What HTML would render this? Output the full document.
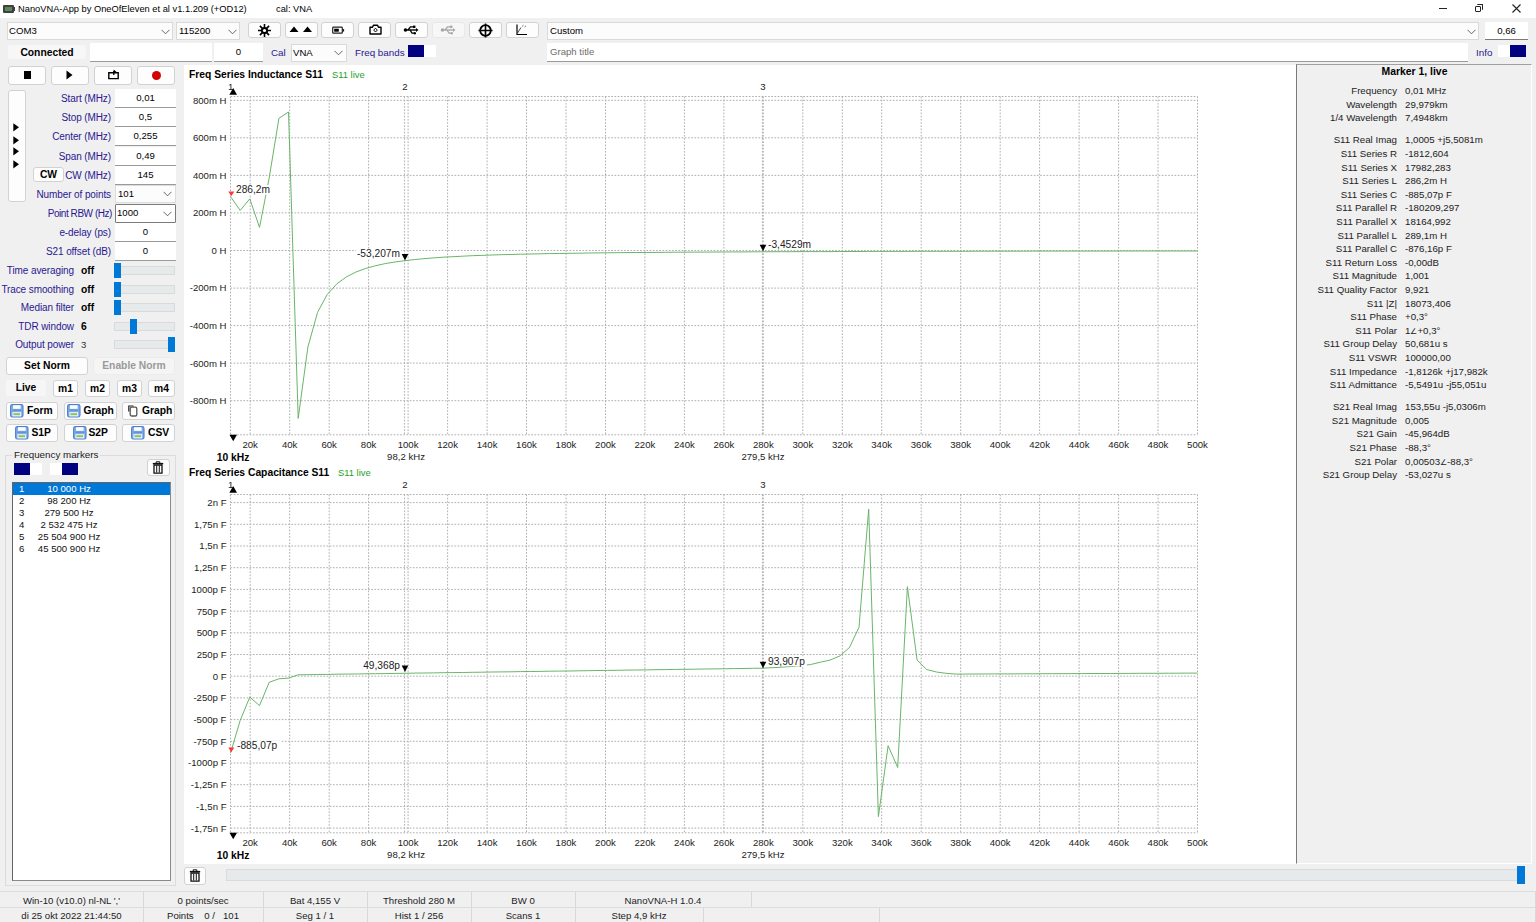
<!DOCTYPE html><html><head><meta charset="utf-8"><style>
*{margin:0;padding:0;box-sizing:border-box}
html,body{width:1536px;height:922px;overflow:hidden;background:#f0f0f0;font-family:"Liberation Sans", sans-serif;font-size:9.6px;color:#000}
.a{position:absolute;white-space:pre}
.btn{position:absolute;background:#fdfdfd;border:1px solid #d2d2d2;border-radius:3px}
.edit{position:absolute;background:#fff;border-bottom:1px solid #9a9a9a}
.combo{position:absolute;background:#fcfcfc;border:1px solid #d9d9d9}
.lbl{position:absolute;color:#2a1890;font-size:10px;letter-spacing:-0.1px;white-space:pre;text-align:right}
.c{text-align:center}
.b{font-weight:bold}
</style></head><body>
<div class="a" style="left:0;top:0;width:1536px;height:18px;background:#fff"></div>
<div class="a" style="left:3px;top:5px;width:11px;height:8px;background:#404040;border-radius:1px"></div>
<div class="a" style="left:5px;top:7px;width:7px;height:4px;background:#5a8a5a"></div>
<div class="a" style="left:14px;top:7px;width:1px;height:4px;background:#3c3c3c"></div>
<div class="a" style="left:18px;top:4px;font-size:9.3px;color:#000">NanoVNA-App by OneOfEleven et al v1.1.209 (+OD12)</div>
<div class="a" style="left:276px;top:4px;font-size:9.3px;color:#000">cal: VNA</div>
<div class="a" style="left:1439px;top:8px;width:8px;height:1px;background:#222"></div>
<div class="a" style="left:1475px;top:6px;width:6px;height:6px;border:1px solid #222;border-radius:1px"></div>
<div class="a" style="left:1477px;top:4px;width:6px;height:6px;border-top:1px solid #222;border-right:1px solid #222;border-radius:1px"></div>
<svg class="a" style="left:1511px;top:3px" width="11" height="11"><path d="M1.5 1.5L9.5 9.5M9.5 1.5L1.5 9.5" stroke="#222" stroke-width="1.1"/></svg>
<div class="combo" style="left:7px;top:22px;width:166px;height:18px"></div>
<div class="a" style="left:9px;top:25px">COM3</div>
<svg class="a" style="left:161px;top:29px" width="9" height="6"><path d="M0.5 0.8L4.5 4.8L8.5 0.8" fill="none" stroke="#555" stroke-width="0.9"/></svg>
<div class="combo" style="left:176px;top:22px;width:64px;height:18px"></div>
<div class="a" style="left:179px;top:25px">115200</div>
<svg class="a" style="left:228px;top:29px" width="9" height="6"><path d="M0.5 0.8L4.5 4.8L8.5 0.8" fill="none" stroke="#555" stroke-width="0.9"/></svg>
<div class="btn" style="left:248px;top:22px;width:33px;height:16px"></div>
<div class="btn" style="left:285px;top:22px;width:33px;height:16px"></div>
<div class="btn" style="left:321px;top:22px;width:33px;height:16px"></div>
<div class="btn" style="left:358px;top:22px;width:33px;height:16px"></div>
<div class="btn" style="left:395px;top:22px;width:33px;height:16px"></div>
<div class="btn" style="left:432px;top:22px;width:33px;height:16px;border-color:#e8e8e8;background:#f7f7f7"></div>
<div class="btn" style="left:469px;top:22px;width:33px;height:16px"></div>
<div class="btn" style="left:506px;top:22px;width:33px;height:16px"></div>
<svg class="a" style="left:257px;top:23px" width="15" height="15"><g stroke="#000" stroke-width="1.6"><path d="M7.5 1V14M1 7.5H14M2.9 2.9L12.1 12.1M12.1 2.9L2.9 12.1"/></g><circle cx="7.5" cy="7.5" r="3.6" fill="#000"/><circle cx="7.5" cy="7.5" r="1.6" fill="#fff"/></svg>
<svg class="a" style="left:289px;top:25px" width="26" height="8"><path d="M0.5 7L5 1.5L9.5 7Z M14 7L18.5 1.5L23 7Z" fill="#000"/></svg>
<svg class="a" style="left:332px;top:26px" width="13" height="9"><rect x="0.7" y="1.2" width="9.6" height="6" rx="0.8" fill="none" stroke="#222" stroke-width="1.2"/><rect x="2.2" y="2.7" width="4.6" height="3" fill="#000"/><rect x="10.6" y="3" width="1.5" height="2.6" fill="#222"/></svg>
<svg class="a" style="left:369px;top:24px" width="13" height="11"><path d="M1 3.2H3.5L4.6 1.2H8.4L9.5 3.2H12V10H1Z" fill="none" stroke="#000" stroke-width="1.4" stroke-linejoin="round"/><path d="M6.5 4.2L8.3 6.1L6.5 8L4.7 6.1Z" fill="none" stroke="#000" stroke-width="1"/></svg>
<svg class="a" style="left:403px;top:25px" width="16" height="10"><path d="M1.5 5H14" stroke="#000" stroke-width="1.4"/><circle cx="2.5" cy="5" r="1.8" fill="#000"/><path d="M5 5L7.5 1.8H10M7 5L9 8.2H11" fill="none" stroke="#000" stroke-width="1.3"/><rect x="10" y="0.6" width="2.4" height="2.4" fill="#000"/><circle cx="11.8" cy="8.2" r="1.2" fill="#000"/><path d="M13 3L15.5 5L13 7Z" fill="#000"/></svg>
<svg class="a" style="left:440px;top:25px" width="16" height="10"><path d="M1.5 5H14" stroke="#a8a8a8" stroke-width="1.4"/><circle cx="2.5" cy="5" r="1.8" fill="#a8a8a8"/><path d="M5 5L7.5 1.8H10M7 5L9 8.2H11" fill="none" stroke="#a8a8a8" stroke-width="1.3"/><rect x="10" y="0.6" width="2.4" height="2.4" fill="#a8a8a8"/><circle cx="11.8" cy="8.2" r="1.2" fill="#a8a8a8"/><path d="M13 3L15.5 5L13 7Z" fill="#a8a8a8"/></svg>
<svg class="a" style="left:478px;top:23px" width="15" height="15"><circle cx="7.5" cy="7.5" r="5.3" fill="none" stroke="#000" stroke-width="1.8"/><path d="M7.5 0.5V14.5M0.5 7.5H14.5" stroke="#000" stroke-width="1.6"/></svg>
<svg class="a" style="left:515px;top:23px" width="14" height="13"><path d="M2 1.5V11.5H12" fill="none" stroke="#000" stroke-width="1.2"/><path d="M2.5 10L6 4.5" stroke="#333" stroke-width="0.9"/><path d="M7 3.5L8.5 2.2M9.5 4L11 2.8" stroke="#555" stroke-width="0.8"/></svg>
<div class="combo" style="left:547px;top:22px;width:932px;height:18px"></div>
<div class="a" style="left:550px;top:25px">Custom</div>
<svg class="a" style="left:1467px;top:29px" width="9" height="6"><path d="M0.5 0.8L4.5 4.8L8.5 0.8" fill="none" stroke="#555" stroke-width="0.9"/></svg>
<div class="edit" style="left:1485px;top:22px;width:43px;height:18px;border-bottom-color:#7a7a7a"></div>
<div class="a c" style="left:1485px;top:25px;width:43px">0,66</div>
<div class="a b c" style="left:8px;top:45px;width:78px;height:14px;background:#f7f7f7;font-size:10.3px;padding-top:2px;border-radius:2px">Connected</div>
<div class="edit" style="left:90px;top:43px;width:122px;height:19px;border-top:1px solid #fff"></div>
<div class="edit" style="left:214px;top:43px;width:49px;height:19px"></div>
<div class="a c" style="left:214px;top:46px;width:49px">0</div>
<div class="a" style="left:271px;top:47px;color:#2a1890;font-size:9.8px">Cal</div>
<div class="combo" style="left:291px;top:44px;width:56px;height:18px"></div>
<div class="a" style="left:293px;top:47px">VNA</div>
<svg class="a" style="left:334px;top:50px" width="9" height="6"><path d="M0.5 0.8L4.5 4.8L8.5 0.8" fill="none" stroke="#555" stroke-width="0.9"/></svg>
<div class="a" style="left:355px;top:47px;color:#2a1890;font-size:9.8px">Freq bands</div>
<div class="a" style="left:408px;top:45px;width:16px;height:12px;background:#000080"></div>
<div class="a" style="left:424px;top:45px;width:12px;height:12px;background:#fff"></div>
<div class="edit" style="left:547px;top:43px;width:921px;height:19px"></div>
<div class="a" style="left:550px;top:46px;color:#6d6d6d">Graph title</div>
<div class="a" style="left:1476px;top:47px;color:#2a1890;font-size:9.8px">Info</div>
<div class="a" style="left:1498px;top:45px;width:12px;height:12px;background:#fff"></div>
<div class="a" style="left:1510px;top:45px;width:16px;height:12px;background:#000080"></div>
<div class="btn" style="left:8px;top:66px;width:38px;height:19px"></div>
<div class="btn" style="left:51px;top:66px;width:38px;height:19px"></div>
<div class="btn" style="left:94px;top:66px;width:38px;height:19px"></div>
<div class="btn" style="left:137px;top:66px;width:38px;height:19px"></div>
<div class="a" style="left:24px;top:71px;width:7px;height:8px;background:#000"></div>
<svg class="a" style="left:66px;top:70px" width="7" height="10"><path d="M0.5 0.5L6.5 5L0.5 9.5Z" fill="#000"/></svg>
<svg class="a" style="left:107px;top:69px" width="13" height="11"><path d="M1.8 3.8H11.2V9.6H1.8Z" fill="none" stroke="#000" stroke-width="1.4"/><path d="M6.8 2V6" stroke="#000" stroke-width="1.3"/><path d="M6.6 0.6L9.4 2.7L6.6 4.8Z" fill="#000"/></svg>
<div class="a" style="left:152px;top:71px;width:9px;height:9px;border-radius:50%;background:#d20000"></div>
<div class="btn" style="left:8px;top:90px;width:18px;height:112px;border-radius:3px"></div>
<svg class="a" style="left:13px;top:122.5px" width="7" height="9"><path d="M0.3 0.2L6 4.3L0.3 8.4Z" fill="#000"/></svg>
<svg class="a" style="left:13px;top:135.5px" width="7" height="9"><path d="M0.3 0.2L6 4.3L0.3 8.4Z" fill="#000"/></svg>
<svg class="a" style="left:13px;top:147px" width="7" height="9"><path d="M0.3 0.2L6 4.3L0.3 8.4Z" fill="#000"/></svg>
<svg class="a" style="left:13px;top:160px" width="7" height="9"><path d="M0.3 0.2L6 4.3L0.3 8.4Z" fill="#000"/></svg>
<div class="edit" style="left:115px;top:89.0px;width:61px;height:19px;border-top:1px solid #fff"></div>
<div class="a c" style="left:115px;top:92.0px;width:61px">0,01</div>
<div class="lbl" style="left:20px;top:93.0px;width:91px">Start (MHz)</div>
<div class="edit" style="left:115px;top:108.2px;width:61px;height:19px;border-top:1px solid #fff"></div>
<div class="a c" style="left:115px;top:111.2px;width:61px">0,5</div>
<div class="lbl" style="left:20px;top:112.2px;width:91px">Stop (MHz)</div>
<div class="edit" style="left:115px;top:127.4px;width:61px;height:19px;border-top:1px solid #fff"></div>
<div class="a c" style="left:115px;top:130.4px;width:61px">0,255</div>
<div class="lbl" style="left:20px;top:131.4px;width:91px">Center (MHz)</div>
<div class="edit" style="left:115px;top:146.6px;width:61px;height:19px;border-top:1px solid #fff"></div>
<div class="a c" style="left:115px;top:149.6px;width:61px">0,49</div>
<div class="lbl" style="left:20px;top:150.6px;width:91px">Span (MHz)</div>
<div class="edit" style="left:115px;top:165.8px;width:61px;height:19px;border-top:1px solid #fff"></div>
<div class="a c" style="left:115px;top:168.8px;width:61px">145</div>
<div class="lbl" style="left:20px;top:169.8px;width:91px">CW (MHz)</div>
<div class="btn b c" style="left:33px;top:167px;width:31px;height:15px;font-size:10.3px;padding-top:1px">CW</div>
<div class="combo" style="left:115px;top:185px;width:61px;height:18px;border-color:#dcdcdc"></div>
<div class="a" style="left:118px;top:188px">101</div>
<svg class="a" style="left:163px;top:191px" width="9" height="6"><path d="M0.5 0.8L4.5 4.8L8.5 0.8" fill="none" stroke="#555" stroke-width="0.9"/></svg>
<div class="lbl" style="left:0px;top:189px;width:111px">Number of points</div>
<div class="a" style="left:115px;top:204px;width:61px;height:19px;background:#fff;border:1px solid #7a7a7a;border-radius:1px"></div>
<div class="a" style="left:117px;top:207px">1000</div>
<svg class="a" style="left:163px;top:211px" width="9" height="6"><path d="M0.5 0.8L4.5 4.8L8.5 0.8" fill="none" stroke="#555" stroke-width="0.9"/></svg>
<div class="lbl" style="left:0px;top:208px;width:112px;letter-spacing:-0.45px">Point RBW (Hz)</div>
<div class="edit" style="left:115px;top:223px;width:61px;height:19px"></div>
<div class="a c" style="left:115px;top:226px;width:61px">0</div>
<div class="lbl" style="left:0px;top:227px;width:111px">e-delay (ps)</div>
<div class="edit" style="left:115px;top:242px;width:61px;height:19px"></div>
<div class="a c" style="left:115px;top:245px;width:61px">0</div>
<div class="lbl" style="left:0px;top:246px;width:111px">S21 offset (dB)</div>
<div class="lbl" style="left:0px;top:265px;width:74px">Time averaging</div>
<div class="a" style="left:81px;top:265px;font-weight:bold;font-size:10.3px;">off</div>
<div class="a" style="left:114px;top:266px;width:61px;height:9px;background:#e7eaea;border:1px solid #dadada"></div>
<div class="a" style="left:114px;top:263px;width:7px;height:15px;background:#0078d7"></div>
<div class="lbl" style="left:0px;top:284px;width:74px">Trace smoothing</div>
<div class="a" style="left:81px;top:284px;font-weight:bold;font-size:10.3px;">off</div>
<div class="a" style="left:114px;top:285px;width:61px;height:9px;background:#e7eaea;border:1px solid #dadada"></div>
<div class="a" style="left:114px;top:282px;width:7px;height:15px;background:#0078d7"></div>
<div class="lbl" style="left:0px;top:302px;width:74px">Median filter</div>
<div class="a" style="left:81px;top:302px;font-weight:bold;font-size:10.3px;">off</div>
<div class="a" style="left:114px;top:303px;width:61px;height:9px;background:#e7eaea;border:1px solid #dadada"></div>
<div class="a" style="left:114px;top:300px;width:7px;height:15px;background:#0078d7"></div>
<div class="lbl" style="left:0px;top:321px;width:74px">TDR window</div>
<div class="a" style="left:81px;top:321px;font-weight:bold;font-size:10.3px;">6</div>
<div class="a" style="left:114px;top:322px;width:61px;height:9px;background:#e7eaea;border:1px solid #dadada"></div>
<div class="a" style="left:130px;top:319px;width:7px;height:15px;background:#0078d7"></div>
<div class="lbl" style="left:0px;top:339px;width:74px">Output power</div>
<div class="a" style="left:81px;top:339px;font-size:9.6px;color:#333;">3</div>
<div class="a" style="left:114px;top:340px;width:61px;height:9px;background:#e7eaea;border:1px solid #dadada"></div>
<div class="a" style="left:168px;top:337px;width:7px;height:15px;background:#0078d7"></div>
<div class="btn b c" style="left:6px;top:357px;width:82px;height:18px;font-size:10.3px;padding-top:2px">Set Norm</div>
<div class="btn b c" style="left:93px;top:357px;width:82px;height:18px;font-size:10.3px;padding-top:2px;color:#9a9a9a;border-color:#ececec;background:#f5f5f5">Enable Norm</div>
<div class="a b c" style="left:6px;top:380px;width:40px;height:16px;font-size:10.3px;padding-top:2px;background:#f6f6f6;border-radius:3px">Live</div>
<div class="btn b c" style="left:53px;top:380px;width:25px;height:17px;font-size:10.3px;padding-top:2px">m1</div>
<div class="btn b c" style="left:85px;top:380px;width:25px;height:17px;font-size:10.3px;padding-top:2px">m2</div>
<div class="btn b c" style="left:117px;top:380px;width:25px;height:17px;font-size:10.3px;padding-top:2px">m3</div>
<div class="btn b c" style="left:148px;top:380px;width:27px;height:17px;font-size:10.3px;padding-top:2px">m4</div>
<div class="btn" style="left:6px;top:402px;width:52px;height:18px"></div>
<svg class="a" style="left:10px;top:404px" width="14" height="14"><rect x="0.6" y="0.6" width="12.4" height="12.4" rx="1.8" fill="#84ace6" stroke="#4a7fd2" stroke-width="1.1"/><rect x="3" y="1.2" width="7.6" height="3.6" fill="#fff"/><rect x="2.4" y="5.6" width="8.8" height="1.2" fill="#5b8ad8"/><rect x="2.4" y="8.2" width="8.8" height="4.2" fill="#f2f6fc"/><rect x="3.4" y="9.2" width="6.8" height="2" fill="#86c466"/></svg>
<div class="a b" style="left:27px;top:405px;font-size:10.3px">Form</div>
<div class="btn" style="left:64px;top:402px;width:53px;height:18px"></div>
<svg class="a" style="left:67px;top:404px" width="14" height="14"><rect x="0.6" y="0.6" width="12.4" height="12.4" rx="1.8" fill="#84ace6" stroke="#4a7fd2" stroke-width="1.1"/><rect x="3" y="1.2" width="7.6" height="3.6" fill="#fff"/><rect x="2.4" y="5.6" width="8.8" height="1.2" fill="#5b8ad8"/><rect x="2.4" y="8.2" width="8.8" height="4.2" fill="#f2f6fc"/><rect x="3.4" y="9.2" width="6.8" height="2" fill="#86c466"/></svg>
<div class="a b" style="left:83.5px;top:405px;font-size:10.3px">Graph</div>
<div class="btn" style="left:122px;top:402px;width:53px;height:18px"></div>
<svg class="a" style="left:128px;top:405px" width="10" height="12"><path d="M0.8 6.5V1H5.5" fill="none" stroke="#222" stroke-width="1.2"/><rect x="2.2" y="2.2" width="6.6" height="8.8" rx="1.6" fill="#fff" stroke="#555" stroke-width="1.3"/></svg>
<div class="a b" style="left:142px;top:405px;font-size:10.3px">Graph</div>
<div class="btn" style="left:6px;top:424px;width:52px;height:18px"></div>
<svg class="a" style="left:15px;top:426px" width="14" height="14"><rect x="0.6" y="0.6" width="12.4" height="12.4" rx="1.8" fill="#84ace6" stroke="#4a7fd2" stroke-width="1.1"/><rect x="3" y="1.2" width="7.6" height="3.6" fill="#fff"/><rect x="2.4" y="5.6" width="8.8" height="1.2" fill="#5b8ad8"/><rect x="2.4" y="8.2" width="8.8" height="4.2" fill="#f2f6fc"/><rect x="3.4" y="9.2" width="6.8" height="2" fill="#86c466"/></svg>
<div class="a b" style="left:31.5px;top:427px;font-size:10.3px">S1P</div>
<div class="btn" style="left:64px;top:424px;width:53px;height:18px"></div>
<svg class="a" style="left:73px;top:426px" width="14" height="14"><rect x="0.6" y="0.6" width="12.4" height="12.4" rx="1.8" fill="#84ace6" stroke="#4a7fd2" stroke-width="1.1"/><rect x="3" y="1.2" width="7.6" height="3.6" fill="#fff"/><rect x="2.4" y="5.6" width="8.8" height="1.2" fill="#5b8ad8"/><rect x="2.4" y="8.2" width="8.8" height="4.2" fill="#f2f6fc"/><rect x="3.4" y="9.2" width="6.8" height="2" fill="#86c466"/></svg>
<div class="a b" style="left:88.5px;top:427px;font-size:10.3px">S2P</div>
<div class="btn" style="left:122px;top:424px;width:53px;height:18px"></div>
<svg class="a" style="left:131px;top:426px" width="14" height="14"><rect x="0.6" y="0.6" width="12.4" height="12.4" rx="1.8" fill="#84ace6" stroke="#4a7fd2" stroke-width="1.1"/><rect x="3" y="1.2" width="7.6" height="3.6" fill="#fff"/><rect x="2.4" y="5.6" width="8.8" height="1.2" fill="#5b8ad8"/><rect x="2.4" y="8.2" width="8.8" height="4.2" fill="#f2f6fc"/><rect x="3.4" y="9.2" width="6.8" height="2" fill="#86c466"/></svg>
<div class="a b" style="left:148px;top:427px;font-size:10.3px">CSV</div>
<div class="a" style="left:5px;top:455px;width:171px;height:431px;border:1px solid #dcdcdc"></div>
<div class="a" style="left:12px;top:449px;padding:0 2px;background:#f0f0f0;color:#222;font-size:9.8px">Frequency markers</div>
<div class="a" style="left:14px;top:463px;width:16px;height:12px;background:#000080"></div>
<div class="a" style="left:30px;top:463px;width:12px;height:12px;background:#fff"></div>
<div class="a" style="left:50px;top:463px;width:12px;height:12px;background:#fff"></div>
<div class="a" style="left:62px;top:463px;width:16px;height:12px;background:#000080"></div>
<div class="btn" style="left:147px;top:459px;width:23px;height:17px"></div>
<svg class="a" style="left:152px;top:461px" width="12" height="13"><path d="M0.8 2.6H11.2" stroke="#111" stroke-width="1.4"/><path d="M4.2 2V0.8H7.8V2" fill="none" stroke="#111" stroke-width="1"/><path d="M2 4H10V12.2H2Z" fill="none" stroke="#111" stroke-width="1.3"/><path d="M4.7 4.5V11.5M7.3 4.5V11.5" stroke="#111" stroke-width="1"/></svg>
<div class="a" style="left:12px;top:482px;width:159px;height:399px;background:#fff;border:1px solid #646464;border-right-color:#8a8a8a;border-bottom-color:#8a8a8a"></div>
<div class="a" style="left:13px;top:483px;width:157px;height:12px;background:#0078d7"></div>
<div class="a" style="left:19px;top:483px;color:#fff">1</div>
<div class="a c" style="left:29px;top:483px;width:80px;color:#fff">10 000 Hz</div>
<div class="a" style="left:19px;top:495px;color:#111">2</div>
<div class="a c" style="left:29px;top:495px;width:80px;color:#111">98 200 Hz</div>
<div class="a" style="left:19px;top:507px;color:#111">3</div>
<div class="a c" style="left:29px;top:507px;width:80px;color:#111">279 500 Hz</div>
<div class="a" style="left:19px;top:519px;color:#111">4</div>
<div class="a c" style="left:29px;top:519px;width:80px;color:#111">2 532 475 Hz</div>
<div class="a" style="left:19px;top:531px;color:#111">5</div>
<div class="a c" style="left:29px;top:531px;width:80px;color:#111">25 504 900 Hz</div>
<div class="a" style="left:19px;top:543px;color:#111">6</div>
<div class="a c" style="left:29px;top:543px;width:80px;color:#111">45 500 900 Hz</div>
<div class="a" style="left:184px;top:65px;width:1112px;height:799px;background:#fff"></div>
<div class="a" style="left:1296px;top:64px;width:236px;height:800px;border-top:1px solid #a0a0a0;border-left:1px solid #7a7a7a;border-right:1px solid #fff;border-bottom:1px solid #fff;background:#f0f0f0"></div>
<div class="btn" style="left:184px;top:867px;width:22px;height:18px"></div>
<svg class="a" style="left:189px;top:869px" width="12" height="13"><path d="M0.8 2.6H11.2" stroke="#111" stroke-width="1.4"/><path d="M4.2 2V0.8H7.8V2" fill="none" stroke="#111" stroke-width="1"/><path d="M2 4H10V12.2H2Z" fill="none" stroke="#111" stroke-width="1.3"/><path d="M4.7 4.5V11.5M7.3 4.5V11.5" stroke="#111" stroke-width="1"/></svg>
<div class="a" style="left:226px;top:869px;width:1299px;height:12px;background:#e7eaea;border:1px solid #dadada"></div>
<div class="a" style="left:1517px;top:866px;width:8px;height:18px;background:#0078d7"></div>
<div class="a" style="left:0;top:891px;width:1536px;height:1px;background:#dcdcdc"></div>
<div class="a" style="left:0;top:907px;width:1536px;height:1px;background:#dcdcdc"></div>
<div class="a" style="left:143px;top:892px;width:1px;height:15px;background:#d8d8d8"></div>
<div class="a" style="left:263px;top:892px;width:1px;height:15px;background:#d8d8d8"></div>
<div class="a" style="left:367px;top:892px;width:1px;height:15px;background:#d8d8d8"></div>
<div class="a" style="left:471px;top:892px;width:1px;height:15px;background:#d8d8d8"></div>
<div class="a" style="left:575px;top:892px;width:1px;height:15px;background:#d8d8d8"></div>
<div class="a" style="left:751px;top:892px;width:1px;height:15px;background:#d8d8d8"></div>
<div class="a" style="left:143px;top:908px;width:1px;height:14px;background:#d8d8d8"></div>
<div class="a" style="left:263px;top:908px;width:1px;height:14px;background:#d8d8d8"></div>
<div class="a" style="left:367px;top:908px;width:1px;height:14px;background:#d8d8d8"></div>
<div class="a" style="left:471px;top:908px;width:1px;height:14px;background:#d8d8d8"></div>
<div class="a" style="left:575px;top:908px;width:1px;height:14px;background:#d8d8d8"></div>
<div class="a" style="left:703px;top:908px;width:1px;height:14px;background:#d8d8d8"></div>
<div class="a" style="left:879px;top:908px;width:1px;height:14px;background:#d8d8d8"></div>
<div class="a c" style="left:0px;top:895px;width:143px;color:#222">Win-10 (v10.0) nl-NL ','</div>
<div class="a c" style="left:143px;top:895px;width:120px;color:#222">0 points/sec</div>
<div class="a c" style="left:263px;top:895px;width:104px;color:#222">Bat 4,155 V</div>
<div class="a c" style="left:367px;top:895px;width:104px;color:#222">Threshold 280 M</div>
<div class="a c" style="left:471px;top:895px;width:104px;color:#222">BW 0</div>
<div class="a c" style="left:575px;top:895px;width:176px;color:#222">NanoVNA-H 1.0.4</div>
<div class="a c" style="left:0px;top:910px;width:143px;color:#222">di 25 okt 2022 21:44:50</div>
<div class="a c" style="left:143px;top:910px;width:120px;color:#222">Points    0 /   101</div>
<div class="a c" style="left:263px;top:910px;width:104px;color:#222">Seg 1 / 1</div>
<div class="a c" style="left:367px;top:910px;width:104px;color:#222">Hist 1 / 256</div>
<div class="a c" style="left:471px;top:910px;width:104px;color:#222">Scans 1</div>
<div class="a c" style="left:575px;top:910px;width:128px;color:#222">Step 4,9 kHz</div>
<div class="a" style="left:1535px;top:892px;width:1px;height:30px;background:#d8d8d8"></div>
<div class="a b c" style="left:1298px;top:66px;width:233px;font-size:10.4px">Marker 1, live</div>
<div class="a" style="left:1300px;top:85.0px;width:97px;text-align:right;color:#222;font-size:9.7px">Frequency</div>
<div class="a" style="left:1405px;top:85.0px;color:#222;font-size:9.7px">0,01 MHz</div>
<div class="a" style="left:1300px;top:98.6px;width:97px;text-align:right;color:#222;font-size:9.7px">Wavelength</div>
<div class="a" style="left:1405px;top:98.6px;color:#222;font-size:9.7px">29,979km</div>
<div class="a" style="left:1300px;top:112.2px;width:97px;text-align:right;color:#222;font-size:9.7px">1/4 Wavelength</div>
<div class="a" style="left:1405px;top:112.2px;color:#222;font-size:9.7px">7,4948km</div>
<div class="a" style="left:1300px;top:134.3px;width:97px;text-align:right;color:#222;font-size:9.7px">S11 Real Imag</div>
<div class="a" style="left:1405px;top:134.3px;color:#222;font-size:9.7px">1,0005 +j5,5081m</div>
<div class="a" style="left:1300px;top:147.9px;width:97px;text-align:right;color:#222;font-size:9.7px">S11 Series R</div>
<div class="a" style="left:1405px;top:147.9px;color:#222;font-size:9.7px">-1812,604</div>
<div class="a" style="left:1300px;top:161.5px;width:97px;text-align:right;color:#222;font-size:9.7px">S11 Series X</div>
<div class="a" style="left:1405px;top:161.5px;color:#222;font-size:9.7px">17982,283</div>
<div class="a" style="left:1300px;top:175.1px;width:97px;text-align:right;color:#222;font-size:9.7px">S11 Series L</div>
<div class="a" style="left:1405px;top:175.1px;color:#222;font-size:9.7px">286,2m H</div>
<div class="a" style="left:1300px;top:188.7px;width:97px;text-align:right;color:#222;font-size:9.7px">S11 Series C</div>
<div class="a" style="left:1405px;top:188.7px;color:#222;font-size:9.7px">-885,07p F</div>
<div class="a" style="left:1300px;top:202.3px;width:97px;text-align:right;color:#222;font-size:9.7px">S11 Parallel R</div>
<div class="a" style="left:1405px;top:202.3px;color:#222;font-size:9.7px">-180209,297</div>
<div class="a" style="left:1300px;top:215.9px;width:97px;text-align:right;color:#222;font-size:9.7px">S11 Parallel X</div>
<div class="a" style="left:1405px;top:215.9px;color:#222;font-size:9.7px">18164,992</div>
<div class="a" style="left:1300px;top:229.5px;width:97px;text-align:right;color:#222;font-size:9.7px">S11 Parallel L</div>
<div class="a" style="left:1405px;top:229.5px;color:#222;font-size:9.7px">289,1m H</div>
<div class="a" style="left:1300px;top:243.1px;width:97px;text-align:right;color:#222;font-size:9.7px">S11 Parallel C</div>
<div class="a" style="left:1405px;top:243.1px;color:#222;font-size:9.7px">-876,16p F</div>
<div class="a" style="left:1300px;top:256.7px;width:97px;text-align:right;color:#222;font-size:9.7px">S11 Return Loss</div>
<div class="a" style="left:1405px;top:256.7px;color:#222;font-size:9.7px">-0,00dB</div>
<div class="a" style="left:1300px;top:270.3px;width:97px;text-align:right;color:#222;font-size:9.7px">S11 Magnitude</div>
<div class="a" style="left:1405px;top:270.3px;color:#222;font-size:9.7px">1,001</div>
<div class="a" style="left:1300px;top:283.9px;width:97px;text-align:right;color:#222;font-size:9.7px">S11 Quality Factor</div>
<div class="a" style="left:1405px;top:283.9px;color:#222;font-size:9.7px">9,921</div>
<div class="a" style="left:1300px;top:297.5px;width:97px;text-align:right;color:#222;font-size:9.7px">S11 |Z|</div>
<div class="a" style="left:1405px;top:297.5px;color:#222;font-size:9.7px">18073,406</div>
<div class="a" style="left:1300px;top:311.1px;width:97px;text-align:right;color:#222;font-size:9.7px">S11 Phase</div>
<div class="a" style="left:1405px;top:311.1px;color:#222;font-size:9.7px">+0,3°</div>
<div class="a" style="left:1300px;top:324.7px;width:97px;text-align:right;color:#222;font-size:9.7px">S11 Polar</div>
<div class="a" style="left:1405px;top:324.7px;color:#222;font-size:9.7px">1<span style="font-size:7.5px">∠</span>+0,3°</div>
<div class="a" style="left:1300px;top:338.3px;width:97px;text-align:right;color:#222;font-size:9.7px">S11 Group Delay</div>
<div class="a" style="left:1405px;top:338.3px;color:#222;font-size:9.7px">50,681u s</div>
<div class="a" style="left:1300px;top:351.9px;width:97px;text-align:right;color:#222;font-size:9.7px">S11 VSWR</div>
<div class="a" style="left:1405px;top:351.9px;color:#222;font-size:9.7px">100000,00</div>
<div class="a" style="left:1300px;top:365.5px;width:97px;text-align:right;color:#222;font-size:9.7px">S11 Impedance</div>
<div class="a" style="left:1405px;top:365.5px;color:#222;font-size:9.7px">-1,8126k +j17,982k</div>
<div class="a" style="left:1300px;top:379.1px;width:97px;text-align:right;color:#222;font-size:9.7px">S11 Admittance</div>
<div class="a" style="left:1405px;top:379.1px;color:#222;font-size:9.7px">-5,5491u -j55,051u</div>
<div class="a" style="left:1300px;top:401.2px;width:97px;text-align:right;color:#222;font-size:9.7px">S21 Real Imag</div>
<div class="a" style="left:1405px;top:401.2px;color:#222;font-size:9.7px">153,55u -j5,0306m</div>
<div class="a" style="left:1300px;top:414.8px;width:97px;text-align:right;color:#222;font-size:9.7px">S21 Magnitude</div>
<div class="a" style="left:1405px;top:414.8px;color:#222;font-size:9.7px">0,005</div>
<div class="a" style="left:1300px;top:428.4px;width:97px;text-align:right;color:#222;font-size:9.7px">S21 Gain</div>
<div class="a" style="left:1405px;top:428.4px;color:#222;font-size:9.7px">-45,964dB</div>
<div class="a" style="left:1300px;top:442.0px;width:97px;text-align:right;color:#222;font-size:9.7px">S21 Phase</div>
<div class="a" style="left:1405px;top:442.0px;color:#222;font-size:9.7px">-88,3°</div>
<div class="a" style="left:1300px;top:455.6px;width:97px;text-align:right;color:#222;font-size:9.7px">S21 Polar</div>
<div class="a" style="left:1405px;top:455.6px;color:#222;font-size:9.7px">0,00503<span style="font-size:7.5px">∠</span>-88,3°</div>
<div class="a" style="left:1300px;top:469.2px;width:97px;text-align:right;color:#222;font-size:9.7px">S21 Group Delay</div>
<div class="a" style="left:1405px;top:469.2px;color:#222;font-size:9.7px">-53,027u s</div>
<svg class="a" style="left:0;top:0" width="1536" height="922" font-family='"Liberation Sans", sans-serif'><text x="189" y="78.2" font-weight="bold" font-size="10.3">Freq Series Inductance S11</text><text x="332" y="78.2" font-size="9.4" fill="#28a028">S11 live</text><path d="M230.5 96.5V434.8M250.2 96.5V434.8M289.7 96.5V434.8M329.2 96.5V434.8M368.6 96.5V434.8M408.1 96.5V434.8M447.6 96.5V434.8M487.1 96.5V434.8M526.5 96.5V434.8M566.0 96.5V434.8M605.5 96.5V434.8M644.9 96.5V434.8M684.4 96.5V434.8M723.9 96.5V434.8M763.3 96.5V434.8M802.8 96.5V434.8M842.3 96.5V434.8M881.7 96.5V434.8M921.2 96.5V434.8M960.7 96.5V434.8M1000.2 96.5V434.8M1039.6 96.5V434.8M1079.1 96.5V434.8M1118.6 96.5V434.8M1158.0 96.5V434.8M1197.5 96.5V434.8" stroke="#b0b0b0" stroke-width="1" stroke-dasharray="1.7 1.5" fill="none"/><path d="M230.5 100.3H1197.5M230.5 137.8H1197.5M230.5 175.4H1197.5M230.5 212.9H1197.5M230.5 250.5H1197.5M230.5 288.1H1197.5M230.5 325.6H1197.5M230.5 363.1H1197.5M230.5 400.7H1197.5M230.5 96.5H1197.5M230.5 434.8H1197.5" stroke="#b0b0b0" stroke-width="1" stroke-dasharray="1.7 1.5" fill="none"/><path d="M404.6 96.5V434.8M762.4 96.5V434.8" stroke="#b0b0b0" stroke-width="1" stroke-dasharray="1.7 1.5" fill="none"/><text x="226.5" y="103.7" text-anchor="end" font-size="9.6" fill="#222">800m H</text><text x="226.5" y="141.2" text-anchor="end" font-size="9.6" fill="#222">600m H</text><text x="226.5" y="178.8" text-anchor="end" font-size="9.6" fill="#222">400m H</text><text x="226.5" y="216.3" text-anchor="end" font-size="9.6" fill="#222">200m H</text><text x="226.5" y="253.9" text-anchor="end" font-size="9.6" fill="#222">0 H</text><text x="226.5" y="291.4" text-anchor="end" font-size="9.6" fill="#222">-200m H</text><text x="226.5" y="329.0" text-anchor="end" font-size="9.6" fill="#222">-400m H</text><text x="226.5" y="366.5" text-anchor="end" font-size="9.6" fill="#222">-600m H</text><text x="226.5" y="404.1" text-anchor="end" font-size="9.6" fill="#222">-800m H</text><text x="250.2" y="447.6" text-anchor="middle" font-size="9.6" fill="#222">20k</text><text x="289.7" y="447.6" text-anchor="middle" font-size="9.6" fill="#222">40k</text><text x="329.2" y="447.6" text-anchor="middle" font-size="9.6" fill="#222">60k</text><text x="368.6" y="447.6" text-anchor="middle" font-size="9.6" fill="#222">80k</text><text x="408.1" y="447.6" text-anchor="middle" font-size="9.6" fill="#222">100k</text><text x="447.6" y="447.6" text-anchor="middle" font-size="9.6" fill="#222">120k</text><text x="487.1" y="447.6" text-anchor="middle" font-size="9.6" fill="#222">140k</text><text x="526.5" y="447.6" text-anchor="middle" font-size="9.6" fill="#222">160k</text><text x="566.0" y="447.6" text-anchor="middle" font-size="9.6" fill="#222">180k</text><text x="605.5" y="447.6" text-anchor="middle" font-size="9.6" fill="#222">200k</text><text x="644.9" y="447.6" text-anchor="middle" font-size="9.6" fill="#222">220k</text><text x="684.4" y="447.6" text-anchor="middle" font-size="9.6" fill="#222">240k</text><text x="723.9" y="447.6" text-anchor="middle" font-size="9.6" fill="#222">260k</text><text x="763.3" y="447.6" text-anchor="middle" font-size="9.6" fill="#222">280k</text><text x="802.8" y="447.6" text-anchor="middle" font-size="9.6" fill="#222">300k</text><text x="842.3" y="447.6" text-anchor="middle" font-size="9.6" fill="#222">320k</text><text x="881.7" y="447.6" text-anchor="middle" font-size="9.6" fill="#222">340k</text><text x="921.2" y="447.6" text-anchor="middle" font-size="9.6" fill="#222">360k</text><text x="960.7" y="447.6" text-anchor="middle" font-size="9.6" fill="#222">380k</text><text x="1000.2" y="447.6" text-anchor="middle" font-size="9.6" fill="#222">400k</text><text x="1039.6" y="447.6" text-anchor="middle" font-size="9.6" fill="#222">420k</text><text x="1079.1" y="447.6" text-anchor="middle" font-size="9.6" fill="#222">440k</text><text x="1118.6" y="447.6" text-anchor="middle" font-size="9.6" fill="#222">460k</text><text x="1158.0" y="447.6" text-anchor="middle" font-size="9.6" fill="#222">480k</text><text x="1197.5" y="447.6" text-anchor="middle" font-size="9.6" fill="#222">500k</text><text x="233" y="460.5" text-anchor="middle" font-size="10.3" font-weight="bold">10 kHz</text><text x="406" y="460" text-anchor="middle" font-size="9.6" fill="#222">98,2 kHz</text><text x="763" y="460" text-anchor="middle" font-size="9.6" fill="#222">279,5 kHz</text><text x="230.6" y="90" text-anchor="middle" font-size="9.6" fill="#222">1</text><text x="405" y="90" text-anchor="middle" font-size="9.6" fill="#222">2</text><text x="763" y="90" text-anchor="middle" font-size="9.6" fill="#222">3</text><path d="M229.3 94.8L233.2 88L237 94.8Z" fill="#000"/><path d="M229.5 434.8L237 434.8L233.2 441.3Z" fill="#000"/><polyline points="230.5,196.6 240.2,210.4 249.8,198.8 259.5,227.4 269.2,178.0 278.9,118.3 288.5,112.0 298.2,418.4 307.9,347.0 317.5,312.5 327.2,294.5 336.9,283.8 346.5,276.8 356.2,271.9 365.9,268.4 375.6,265.7 385.2,263.6 394.9,262.0 404.6,260.7 414.2,259.6 423.9,258.7 433.6,257.9 443.2,257.2 452.9,256.7 462.6,256.2 472.2,255.7 481.9,255.4 491.6,255.0 501.3,254.7 510.9,254.5 520.6,254.2 530.3,254.0 539.9,253.8 549.6,253.6 559.3,253.5 569.0,253.3 578.6,253.2 588.3,253.0 598.0,252.9 607.6,252.8 617.3,252.7 627.0,252.6 636.6,252.5 646.3,252.5 656.0,252.4 665.6,252.3 675.3,252.2 685.0,252.2 694.7,252.1 704.3,252.1 714.0,252.0 723.7,252.0 733.3,251.9 743.0,251.9 752.7,251.8 762.4,251.8 772.0,251.7 781.7,251.7 791.4,251.7 801.0,251.6 810.7,251.6 820.4,251.6 830.0,251.6 839.7,251.5 849.4,251.5 859.0,251.5 868.7,251.4 878.4,251.4 888.1,251.4 897.7,251.4 907.4,251.4 917.1,251.3 926.7,251.3 936.4,251.3 946.1,251.3 955.8,251.3 965.4,251.3 975.1,251.2 984.8,251.2 994.4,251.2 1004.1,251.2 1013.8,251.2 1023.4,251.2 1033.1,251.1 1042.8,251.1 1052.5,251.1 1062.1,251.1 1071.8,251.1 1081.5,251.1 1091.1,251.1 1100.8,251.1 1110.5,251.1 1120.1,251.0 1129.8,251.0 1139.5,251.0 1149.2,251.0 1158.8,251.0 1168.5,251.0 1178.2,251.0 1187.8,251.0 1197.5,251.0" fill="none" stroke="#62b062" stroke-width="0.95" stroke-linejoin="round"/><path d="M228.3 191.6L234.3 191.6L231.3 196.3Z" fill="#ff3636"/><rect x="235.0" y="185.1" width="34.4" height="9.5" fill="#fff"/><text x="236" y="193.1" text-anchor="start" font-size="10.2" fill="#222">286,2m</text><path d="M401.7 254.0L408.3 254.0L405.0 260.5Z" fill="#000"/><rect x="355.8" y="249.0" width="45.2" height="9.5" fill="#fff"/><text x="400" y="257.0" text-anchor="end" font-size="10.2" fill="#222">-53,207m</text><path d="M759.7 244.7L766.3 244.7L763.0 251.2Z" fill="#000"/><rect x="767.0" y="239.7" width="45.2" height="9.5" fill="#fff"/><text x="768" y="247.7" text-anchor="start" font-size="10.2" fill="#222">-3,4529m</text><text x="189" y="476.2" font-weight="bold" font-size="10.3">Freq Series Capacitance S11</text><text x="338" y="476.2" font-size="9.4" fill="#28a028">S11 live</text><path d="M230.5 494.5V832.8M250.2 494.5V832.8M289.7 494.5V832.8M329.2 494.5V832.8M368.6 494.5V832.8M408.1 494.5V832.8M447.6 494.5V832.8M487.1 494.5V832.8M526.5 494.5V832.8M566.0 494.5V832.8M605.5 494.5V832.8M644.9 494.5V832.8M684.4 494.5V832.8M723.9 494.5V832.8M763.3 494.5V832.8M802.8 494.5V832.8M842.3 494.5V832.8M881.7 494.5V832.8M921.2 494.5V832.8M960.7 494.5V832.8M1000.2 494.5V832.8M1039.6 494.5V832.8M1079.1 494.5V832.8M1118.6 494.5V832.8M1158.0 494.5V832.8M1197.5 494.5V832.8" stroke="#b0b0b0" stroke-width="1" stroke-dasharray="1.7 1.5" fill="none"/><path d="M230.5 502.6H1197.5M230.5 524.3H1197.5M230.5 546.0H1197.5M230.5 567.7H1197.5M230.5 589.4H1197.5M230.5 611.1H1197.5M230.5 632.8H1197.5M230.5 654.5H1197.5M230.5 676.2H1197.5M230.5 697.9H1197.5M230.5 719.6H1197.5M230.5 741.3H1197.5M230.5 763.0H1197.5M230.5 784.7H1197.5M230.5 806.4H1197.5M230.5 828.1H1197.5M230.5 494.5H1197.5M230.5 832.8H1197.5" stroke="#b0b0b0" stroke-width="1" stroke-dasharray="1.7 1.5" fill="none"/><path d="M404.6 494.5V832.8M762.4 494.5V832.8" stroke="#b0b0b0" stroke-width="1" stroke-dasharray="1.7 1.5" fill="none"/><text x="226.5" y="506.0" text-anchor="end" font-size="9.6" fill="#222">2n F</text><text x="226.5" y="527.7" text-anchor="end" font-size="9.6" fill="#222">1,75n F</text><text x="226.5" y="549.4" text-anchor="end" font-size="9.6" fill="#222">1,5n F</text><text x="226.5" y="571.1" text-anchor="end" font-size="9.6" fill="#222">1,25n F</text><text x="226.5" y="592.8" text-anchor="end" font-size="9.6" fill="#222">1000p F</text><text x="226.5" y="614.5" text-anchor="end" font-size="9.6" fill="#222">750p F</text><text x="226.5" y="636.2" text-anchor="end" font-size="9.6" fill="#222">500p F</text><text x="226.5" y="657.9" text-anchor="end" font-size="9.6" fill="#222">250p F</text><text x="226.5" y="679.6" text-anchor="end" font-size="9.6" fill="#222">0 F</text><text x="226.5" y="701.3" text-anchor="end" font-size="9.6" fill="#222">-250p F</text><text x="226.5" y="723.0" text-anchor="end" font-size="9.6" fill="#222">-500p F</text><text x="226.5" y="744.7" text-anchor="end" font-size="9.6" fill="#222">-750p F</text><text x="226.5" y="766.4" text-anchor="end" font-size="9.6" fill="#222">-1000p F</text><text x="226.5" y="788.1" text-anchor="end" font-size="9.6" fill="#222">-1,25n F</text><text x="226.5" y="809.8" text-anchor="end" font-size="9.6" fill="#222">-1,5n F</text><text x="226.5" y="831.5" text-anchor="end" font-size="9.6" fill="#222">-1,75n F</text><text x="250.2" y="845.6" text-anchor="middle" font-size="9.6" fill="#222">20k</text><text x="289.7" y="845.6" text-anchor="middle" font-size="9.6" fill="#222">40k</text><text x="329.2" y="845.6" text-anchor="middle" font-size="9.6" fill="#222">60k</text><text x="368.6" y="845.6" text-anchor="middle" font-size="9.6" fill="#222">80k</text><text x="408.1" y="845.6" text-anchor="middle" font-size="9.6" fill="#222">100k</text><text x="447.6" y="845.6" text-anchor="middle" font-size="9.6" fill="#222">120k</text><text x="487.1" y="845.6" text-anchor="middle" font-size="9.6" fill="#222">140k</text><text x="526.5" y="845.6" text-anchor="middle" font-size="9.6" fill="#222">160k</text><text x="566.0" y="845.6" text-anchor="middle" font-size="9.6" fill="#222">180k</text><text x="605.5" y="845.6" text-anchor="middle" font-size="9.6" fill="#222">200k</text><text x="644.9" y="845.6" text-anchor="middle" font-size="9.6" fill="#222">220k</text><text x="684.4" y="845.6" text-anchor="middle" font-size="9.6" fill="#222">240k</text><text x="723.9" y="845.6" text-anchor="middle" font-size="9.6" fill="#222">260k</text><text x="763.3" y="845.6" text-anchor="middle" font-size="9.6" fill="#222">280k</text><text x="802.8" y="845.6" text-anchor="middle" font-size="9.6" fill="#222">300k</text><text x="842.3" y="845.6" text-anchor="middle" font-size="9.6" fill="#222">320k</text><text x="881.7" y="845.6" text-anchor="middle" font-size="9.6" fill="#222">340k</text><text x="921.2" y="845.6" text-anchor="middle" font-size="9.6" fill="#222">360k</text><text x="960.7" y="845.6" text-anchor="middle" font-size="9.6" fill="#222">380k</text><text x="1000.2" y="845.6" text-anchor="middle" font-size="9.6" fill="#222">400k</text><text x="1039.6" y="845.6" text-anchor="middle" font-size="9.6" fill="#222">420k</text><text x="1079.1" y="845.6" text-anchor="middle" font-size="9.6" fill="#222">440k</text><text x="1118.6" y="845.6" text-anchor="middle" font-size="9.6" fill="#222">460k</text><text x="1158.0" y="845.6" text-anchor="middle" font-size="9.6" fill="#222">480k</text><text x="1197.5" y="845.6" text-anchor="middle" font-size="9.6" fill="#222">500k</text><text x="233" y="858.5" text-anchor="middle" font-size="10.3" font-weight="bold">10 kHz</text><text x="406" y="858" text-anchor="middle" font-size="9.6" fill="#222">98,2 kHz</text><text x="763" y="858" text-anchor="middle" font-size="9.6" fill="#222">279,5 kHz</text><text x="230.6" y="488" text-anchor="middle" font-size="9.6" fill="#222">1</text><text x="405" y="488" text-anchor="middle" font-size="9.6" fill="#222">2</text><text x="763" y="488" text-anchor="middle" font-size="9.6" fill="#222">3</text><path d="M229.3 492.8L233.2 486L237 492.8Z" fill="#000"/><path d="M229.5 832.8L237 832.8L233.2 839.3Z" fill="#000"/><polyline points="230.5,753.0 240.2,720.4 249.8,697.1 259.5,705.6 269.2,682.3 278.9,678.8 288.5,678.1 298.2,674.8 307.9,674.7 317.5,674.5 327.2,674.4 336.9,674.2 346.5,674.1 356.2,674.0 365.9,673.8 375.6,673.7 385.2,673.6 394.9,673.4 404.6,673.3 414.2,673.1 423.9,673.0 433.6,672.9 443.2,672.7 452.9,672.6 462.6,672.5 472.2,672.3 481.9,672.2 491.6,672.0 501.3,671.9 510.9,671.8 520.6,671.6 530.3,671.5 539.9,671.4 549.6,671.2 559.3,671.1 569.0,671.0 578.6,670.8 588.3,670.7 598.0,670.5 607.6,670.4 617.3,670.3 627.0,670.1 636.6,670.0 646.3,669.9 656.0,669.7 665.6,669.6 675.3,669.4 685.0,669.3 694.7,669.2 704.3,669.0 714.0,668.9 723.7,668.8 733.3,668.6 743.0,668.5 752.7,668.3 762.4,668.2 772.0,667.7 781.7,667.2 791.4,666.5 801.0,665.6 810.7,664.5 820.4,662.2 830.0,660.1 839.7,656.0 849.4,647.6 859.0,627.3 868.7,509.2 878.4,816.6 888.1,745.7 897.7,767.5 907.4,586.7 917.1,660.0 926.7,669.5 936.4,672.0 946.1,673.3 955.8,674.1 965.4,674.1 975.1,674.0 984.8,674.0 994.4,673.9 1004.1,673.9 1013.8,673.9 1023.4,673.8 1033.1,673.8 1042.8,673.7 1052.5,673.7 1062.1,673.7 1071.8,673.6 1081.5,673.6 1091.1,673.5 1100.8,673.5 1110.5,673.5 1120.1,673.4 1129.8,673.4 1139.5,673.3 1149.2,673.3 1158.8,673.3 1168.5,673.2 1178.2,673.2 1187.8,673.1 1197.5,673.1" fill="none" stroke="#62b062" stroke-width="0.95" stroke-linejoin="round"/><path d="M228.3 747.5L234.3 747.5L231.3 752.2Z" fill="#ff3636"/><rect x="236.0" y="741.0" width="45.2" height="9.5" fill="#fff"/><text x="237" y="749.0" text-anchor="start" font-size="10.2" fill="#222">-885,07p</text><path d="M401.7 665.6L408.3 665.6L405.0 672.1Z" fill="#000"/><rect x="361.2" y="660.6" width="39.8" height="9.5" fill="#fff"/><text x="400" y="668.6" text-anchor="end" font-size="10.2" fill="#222">49,368p</text><path d="M759.7 661.7L766.3 661.7L763.0 668.2Z" fill="#000"/><rect x="767.0" y="656.7" width="39.8" height="9.5" fill="#fff"/><text x="768" y="664.7" text-anchor="start" font-size="10.2" fill="#222">93,907p</text></svg>
</body></html>
